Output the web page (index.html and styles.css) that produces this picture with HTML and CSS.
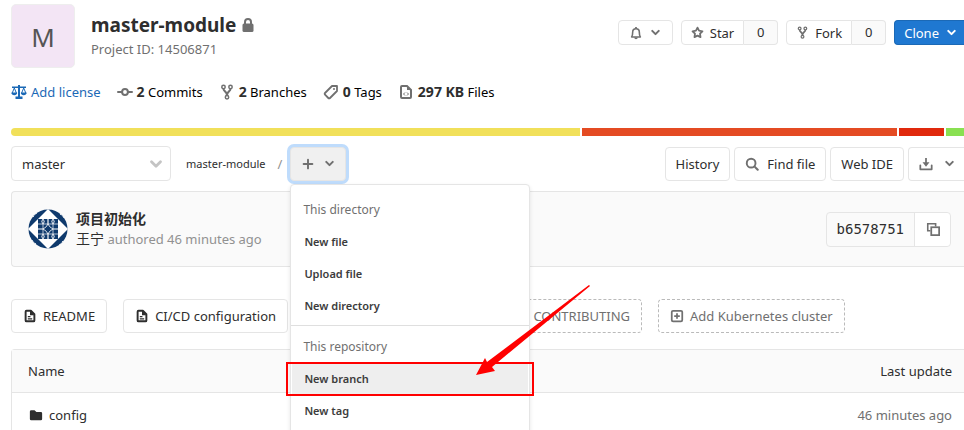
FILE: index.html
```html
<!DOCTYPE html>
<html lang="en">
<head>
<meta charset="utf-8">
<title>master-module</title>
<link rel="stylesheet" href="styles.css">
</head>
<body>
<svg class="defs" aria-hidden="true">
  <symbol id="chevron" viewBox="0 0 16 16"><path d="M4 6l4 4 4-4" fill="none" stroke="currentColor" stroke-width="2.500" stroke-linecap="round" stroke-linejoin="round"/></symbol>
  <symbol id="fork" viewBox="0 0 16 16"><g fill="none" stroke="currentColor" stroke-width="1.500"><circle cx="4.500" cy="3" r="1.700"/><circle cx="11.500" cy="3" r="1.700"/><circle cx="8" cy="13.200" r="1.700"/><path d="M4.500 4.800c0 3 3.500 2.200 3.500 6.500M11.500 4.800c0 3-3.500 2.200-3.500 6.500" stroke-width="2"/></g></symbol>
  <symbol id="doc" viewBox="0 0 16 16"><path d="M4 2h5l4 4v7a1 1 0 0 1-1 1H4a1 1 0 0 1-1-1V3a1 1 0 0 1 1-1z" fill="none" stroke="currentColor" stroke-width="2.200" stroke-linejoin="round"/><path d="M8 2v5h5l-4-5z" fill="currentColor"/><path d="M5.500 8.700h3M5.500 11.200h5" stroke="currentColor" stroke-width="1.400"/></symbol>
</svg>
<main class="project">
  <header class="project-header">
    <div class="avatar">M</div>
    <div class="title-block">
      <h1>master-module
        <svg class="icon" viewBox="0 0 16 16"><path d="M5 7V5a3 3 0 0 1 6 0v2" fill="none" stroke="currentColor" stroke-width="2"/><rect x="2.500" y="6.500" width="11" height="8.500" rx="1.500" fill="currentColor"/></svg>
      </h1>
      <p>Project ID: 14506871</p>
    </div>
    <div class="header-actions">
      <button class="btn small bell" aria-label="Notifications">
        <svg class="icon" viewBox="0 0 16 16"><path d="M3 12.500c1.200-1.500 1.200-3 1.200-5.500a3.800 3.800 0 0 1 7.600 0c0 2.500 0 4 1.200 5.500z" fill="none" stroke="currentColor" stroke-width="1.800" stroke-linejoin="round"/><path d="M7 1h2v2H7zM6 13h4a2 2 0 0 1-4 0z" fill="currentColor"/></svg>
        <svg class="icon caret"><use href="#chevron"/></svg>
      </button>
      <div class="split"><button class="btn small"><svg class="icon" viewBox="0 0 16 16"><path d="M8 2l1.900 3.800 4.200.700-3 3 .600 4.200L8 11.800l-3.700 1.900.600-4.200-3-3 4.200-.700z" fill="none" stroke="currentColor" stroke-width="2.200" stroke-linejoin="round"/></svg>Star</button><a class="count" href="#">0</a></div>
      <div class="split"><button class="btn small"><svg class="icon"><use href="#fork"/></svg>Fork</button><a class="count" href="#">0</a></div>
      <button class="btn small primary">Clone<svg class="icon caret"><use href="#chevron"/></svg></button>
    </div>
  </header>

  <nav class="stats">
    <a class="license" href="#"><svg class="icon" viewBox="0 0 16 16"><path d="M7 1h2v1.500h6V4H9v8.500h2.500V15h-7v-2.500H7V4H1V2.500h6z" fill="currentColor"/><path d="M3.300 4L1 9.500h4.600zM12.700 4l-2.300 5.500H15z" fill="none" stroke="currentColor"/><path d="M.5 8.500h5.600a2.800 2.800 0 0 1-5.600 0zM9.900 8.500h5.600a2.800 2.800 0 0 1-5.600 0z" fill="currentColor"/></svg>Add license</a>
    <a href="#"><svg class="icon" viewBox="0 0 16 16"><path d="M1 8h3.500M11.500 8H15" stroke="currentColor" stroke-width="2" stroke-linecap="round"/><circle cx="8" cy="8" r="2.900" fill="none" stroke="currentColor" stroke-width="2"/></svg><span><b>2</b> Commits</span></a>
    <a href="#"><svg class="icon"><use href="#fork"/></svg><span><b>2</b> Branches</span></a>
    <a href="#"><svg class="icon" viewBox="0 0 16 16"><path d="M9 2h5v5l-7 7a1.200 1.200 0 0 1-1.700 0L2 10.700A1.200 1.200 0 0 1 2 9z" fill="none" stroke="currentColor" stroke-width="1.800" stroke-linejoin="round"/><circle cx="11" cy="5" r="1" fill="currentColor"/></svg><span><b>0</b> Tags</span></a>
    <a href="#"><svg class="icon" viewBox="0 0 16 16"><path d="M4 2h5l4 4v7a1 1 0 0 1-1 1H4a1 1 0 0 1-1-1V3a1 1 0 0 1 1-1z" fill="none" stroke="currentColor" stroke-width="2"/><path d="M9 2v4h4z" fill="currentColor"/><path d="M7 8.500L5.500 10 7 11.500M9 8.500l1.500 1.500L9 11.500" fill="none" stroke="currentColor"/></svg><span><b>297 KB</b> Files</span></a>
  </nav>

  <div class="languages"><span class="js"></span><span class="html"></span><span class="red"></span><span class="green"></span></div>

  <div class="tree-controls">
    <div class="branch">
      <select aria-label="Branch"><option>master</option></select>
      <svg class="icon"><use href="#chevron"/></svg>
    </div>
    <a class="crumb" href="#">master-module</a>
    <span class="slash">/</span>
    <div class="add">
      <button class="btn add-button" aria-label="Add to tree" aria-expanded="true">
        <svg class="icon" viewBox="0 0 16 16"><path d="M8 3v10M3 8h10" stroke="currentColor" stroke-width="2.200" stroke-linecap="round"/></svg>
        <svg class="icon caret"><use href="#chevron"/></svg>
      </button>
      <div class="menu">
        <h2>This directory</h2>
        <a href="#">New file</a>
        <a href="#">Upload file</a>
        <a href="#">New directory</a>
        <hr>
        <h2>This repository</h2>
        <a class="active" href="#">New branch</a>
        <a href="#">New tag</a>
      </div>
    </div>
    <div class="tree-actions">
      <button class="btn">History</button>
      <button class="btn find"><svg class="icon" viewBox="0 0 16 16"><circle cx="7" cy="7" r="5" fill="none" stroke="currentColor" stroke-width="2.200"/><path d="M11 11l3.500 3.500" stroke="currentColor" stroke-width="2.400" stroke-linecap="round"/></svg>Find file</button>
      <button class="btn">Web IDE</button>
      <button class="btn download" aria-label="Download">
        <svg class="icon" viewBox="0 0 16 16"><path d="M1.500 9.500V14h13V9.500" fill="none" stroke="currentColor" stroke-width="2" stroke-linejoin="round" stroke-linecap="round"/><path d="M7 1h2v5h3l-4 5-4-5h3z" fill="currentColor"/></svg>
        <svg class="icon caret"><use href="#chevron"/></svg>
      </button>
    </div>
  </div>

  <section class="commit">
    <svg class="identicon" viewBox="0 0 40 40" aria-hidden="true">
      <defs><clipPath id="round"><circle cx="20" cy="20" r="19.500"/></clipPath></defs>
      <g clip-path="url(#round)">
        <path fill="#fff" d="M0 0h40v40H0z"/>
        <path fill="#0f3a6d" d="M0 0h20L0 20zM20 0h20v20zM40 20v20H20zM20 40H0V20z"/>
        <path d="M2 11L11 2M29 2l9 9M38 29l-9 9M11 38l-9-9" stroke="#fff" stroke-width="1" stroke-dasharray="2 2"/>
        <path fill="#0f3a6d" d="M10 10h20v20H10z"/>
        <g fill="none" stroke="#fff"><path d="M20 10v20M10 20h20" stroke-width="1.200"/><path d="M15 10l-1.500 2.500L15 15l1.500-2.500zM25 10l-1.500 2.500L25 15l1.500-2.500zM15 25l-1.500 2.500L15 30l1.500-2.500zM25 25l-1.500 2.500L25 30l1.500-2.500zM10 15h20M10 25h20M15 10v20M25 10v20" stroke-width=".7"/></g>
        <path d="M20 15l2 3 3 2-3 2-2 3-2-3-3-2 3-2z" fill="#0f3a6d" stroke="#fff" stroke-width=".8"/>
      </g>
    </svg>
    <div class="commit-text">
      <a class="commit-title" href="#">项目初始化</a>
      <p><a href="#">王宁</a> authored 46 minutes ago</p>
    </div>
    <div class="sha"><code>b6578751</code><button aria-label="Copy commit SHA"><svg class="icon" viewBox="0 0 16 16"><path d="M5 10H2V2h9v3" fill="none" stroke="currentColor" stroke-width="1.800"/><rect x="6" y="6" width="9" height="9" fill="none" stroke="currentColor" stroke-width="2"/></svg></button></div>
  </section>

  <div class="quick-links">
    <a class="btn" href="#"><svg class="icon"><use href="#doc"/></svg>README</a>
    <a class="btn" href="#"><svg class="icon"><use href="#doc"/></svg>CI/CD configuration</a>
    <a class="btn dashed contributing" href="#">CONTRIBUTING</a>
    <a class="btn dashed" href="#"><svg class="icon" viewBox="0 0 16 16"><rect x="2" y="2" width="12" height="12" rx="1.500" fill="none" stroke="currentColor" stroke-width="2"/><path d="M8 4.800v6.400M4.800 8h6.400" stroke="currentColor" stroke-width="2"/></svg>Add Kubernetes cluster</a>
  </div>

  <table class="files">
    <thead><tr><th>Name</th><th class="updated">Last update</th></tr></thead>
    <tbody><tr><td><a href="#"><svg class="icon" viewBox="0 0 16 16"><path d="M1 4a1.500 1.500 0 0 1 1.500-1.500h3.800L8.500 4.500h5A1.500 1.500 0 0 1 15 6v6.500a1.500 1.500 0 0 1-1.500 1.500h-11A1.500 1.500 0 0 1 1 12.500z" fill="currentColor"/></svg>config</a></td><td class="updated">46 minutes ago</td></tr></tbody>
  </table>
</main>
<div class="highlight"></div>
<svg class="arrow" viewBox="0 0 116 92" aria-hidden="true"><path d="M0 90L9 73l2 4L113 0l1 1L16 82l3 4z" fill="#f00"/></svg>
</body>
</html>
```

FILE: styles.css
```css
* { box-sizing: border-box; }

body {
  position: relative;
  margin: 0;
  height: 100vh;
  overflow: hidden;
  background: #fff;
  color: #2e2e2e;
  font: 13px/20px "Noto Sans", "Noto Sans CJK SC", sans-serif;
}

a { color: inherit; text-decoration: none; }
h1, h2, p { margin: 0; }
.defs { position: absolute; width: 0; height: 0; }
.icon { width: 14px; height: 14px; flex: none; color: #707070; }
.project { padding: 4px 0 0 11px; }

.btn {
  display: flex;
  align-items: center;
  justify-content: center;
  gap: 5px;
  height: 34px;
  padding: 0 10px;
  border: 1px solid #e5e5e5;
  border-radius: 4px;
  background: #fff;
  color: #2e2e2e;
  font: inherit;
  white-space: nowrap;
}
.btn .caret { width: 13px; height: 13px; }

.project-header { display: flex; gap: 16px; }
.avatar {
  width: 64px;
  height: 64px;
  border: 1px solid #eee;
  border-radius: 5px;
  background: #f3e5f5;
  color: #555;
  font-size: 26px;
  line-height: 64px;
  text-align: center;
}
.title-block { padding-top: 9px; }
h1 {
  display: flex;
  align-items: center;
  gap: 4px;
  font-size: 19px;
  line-height: 24px;
}
h1 .icon { width: 16px; height: 16px; }
.title-block p { padding-top: 2px; color: #707070; }
.header-actions {
  display: flex;
  align-items: flex-start;
  gap: 8px;
  margin-left: auto;
  padding-top: 16px;
}
.small { height: 25px; gap: 6px; }
.split { display: flex; }
.split .btn { padding: 0 9px; border-radius: 4px 0 0 4px; gap: 6px; }
.split .icon { width: 13px; height: 13px; }
.count {
  width: 34px;
  height: 25px;
  border: 1px solid #e5e5e5;
  border-left: 0;
  border-radius: 0 4px 4px 0;
  background: #fafafa;
  line-height: 23px;
  text-align: center;
}
.primary {
  padding: 0 6px 0 9px;
  border-color: #1b69b6;
  border-right: 0;
  border-radius: 4px 0 0 4px;
  background: #1f78d1;
  color: #fff;
}
.primary .icon { color: #fff; }

.stats { display: flex; gap: 16px; padding-top: 14px; color: #000; }
.stats a { display: flex; align-items: center; gap: 4px; }
.stats .icon { width: 16px; height: 16px; }
.stats .license, .stats .license .icon { color: #1b69b6; }
.stats b { color: #2e2e2e; font-size: 14px; }

.languages {
  display: grid;
  grid-template-columns: 569fr 315fr 45fr 18fr;
  gap: 2px;
  height: 8px;
  margin-top: 26px;
  border-radius: 4px 0 0 4px;
  overflow: hidden;
}
.js { background: #f1e05a; }
.html { background: #e44b23; }
.red { background: #e0290d; }
.green { background: #89e051; }

.tree-controls { display: flex; align-items: center; margin-top: 10px; }
.branch { display: grid; align-items: center; width: 160px; }
.branch select {
  grid-area: 1 / 1;
  appearance: none;
  height: 35px;
  padding: 0 10px;
  border: 1px solid #e5e5e5;
  border-radius: 4px;
  background: #fff;
  color: #2e2e2e;
  font: inherit;
}
.branch .icon {
  grid-area: 1 / 1;
  justify-self: end;
  width: 18px;
  height: 18px;
  margin-right: 6px;
  color: #c4c4c4;
  pointer-events: none;
}
.crumb { margin-left: 15px; font-size: 11px; }
.slash { margin: 0 8px 0 12px; color: #919191; }
.add { position: relative; }
.add-button {
  width: 56px;
  background: #f0f0f0;
  box-shadow: 0 0 0 3px #bfdcfc;
  gap: 8px;
}
.menu {
  position: absolute;
  z-index: 2;
  top: 37px;
  left: 0;
  width: 240px;
  padding: 9px 1px;
  border: 1px solid #e5e5e5;
  border-radius: 4px;
  background: #fff;
  box-shadow: 0 2px 4px #0000001a;
}
.menu h2 {
  padding: 0 11px;
  color: #707070;
  font-size: 12px;
  font-weight: 400;
  line-height: 32px;
}
.menu a {
  display: block;
  padding: 0 12px;
  color: #3c3c3c;
  font-size: 11px;
  font-weight: 600;
  line-height: 32px;
}
.menu hr { margin: 3px -1px 5px; border: 0; border-top: 1px solid #dfdfdf; }
.menu .active { background: #eee; }
.tree-actions { display: flex; gap: 4px; margin-left: auto; }
.find { gap: 8px; }
.download {
  gap: 10px;
  padding-right: 8px;
  border-right: 0;
  border-radius: 4px 0 0 4px;
}

.commit {
  display: flex;
  align-items: center;
  gap: 8px;
  height: 76px;
  margin-top: 10px;
  padding: 0 13px 0 16px;
  border: 1px solid #e5e5e5;
  border-right: 0;
  border-radius: 4px 0 0 4px;
  background: #fafafa;
}
.identicon { width: 40px; height: 40px; }
.commit-title { font-size: 14px; font-weight: 700; }
.commit-text p { color: #919191; }
.commit-text p a { color: #2e2e2e; font-size: 14px; }
.sha {
  display: flex;
  height: 35px;
  margin-left: auto;
  border: 1px solid #e5e5e5;
  border-radius: 4px;
}
.sha code { padding: 0 10px; font: 14px/33px "DejaVu Sans Mono", monospace; }
.sha button {
  display: grid;
  place-items: center;
  width: 36px;
  padding: 0;
  border: 0;
  border-left: 1px solid #e5e5e5;
  border-radius: 0 4px 4px 0;
  background: #fff;
}

.quick-links { display: flex; gap: 16px; margin-top: 32px; }
.quick-links .btn { gap: 6px; padding: 0 11px; }
.quick-links .icon { color: #2e2e2e; }
.quick-links .dashed { border: 1px dashed #bababa; color: #707070; }
.quick-links .dashed .icon { color: #707070; }
.quick-links .contributing { width: 338px; justify-content: flex-end; }

.files {
  width: 100%;
  margin-top: 16px;
  border: 1px solid #e5e5e5;
  border-right: 0;
  border-radius: 4px 0 0 0;
  border-spacing: 0;
}
.files th {
  height: 43px;
  padding: 0 16px;
  border-bottom: 1px solid #e5e5e5;
  background: #fafafa;
  font-weight: 400;
  text-align: left;
}
.files td { height: 43px; padding: 0 16px; }
.files td a { display: flex; align-items: center; gap: 6px; }
.files td .icon { color: #2e2e2e; margin-left: 1px; }
.files .updated { padding-right: 12px; text-align: right; }
.files td.updated { color: #707070; }

.highlight {
  position: absolute;
  z-index: 3;
  left: 286px;
  top: 362px;
  width: 248px;
  height: 34px;
  border: 2px solid #f00;
}
.arrow {
  position: absolute;
  z-index: 4;
  left: 476px;
  top: 285px;
  width: 116px;
  height: 92px;
}
```
